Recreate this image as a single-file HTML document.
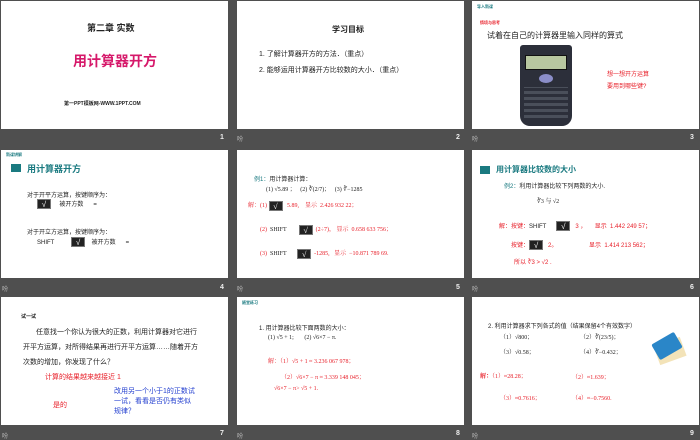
<!DOCTYPE html>
<html><head><meta charset="utf-8"><style>
*{margin:0;padding:0;box-sizing:border-box}
body{width:700px;height:438px;background:#4f4f4f;position:relative;overflow:hidden;font-family:"Liberation Sans","Noto Sans CJK SC",sans-serif;color:#222}
.s{position:absolute;background:#fff;width:227px;height:128px;overflow:hidden}
.t{position:absolute;white-space:nowrap;font-size:7px}
.n{position:absolute;color:#eee;font-size:7px;font-weight:bold}
.d{position:absolute;color:#bbb;font-size:6px}
.r{color:#e8202a}
.k{display:inline-block;width:14px;height:10px;background:#222;border:1px solid #777;color:#fff;font-size:8px;line-height:9px;text-align:center;vertical-align:middle}
.tl{color:#1a7a80;font-weight:bold}
.ic{position:absolute;width:10px;height:8px;background:#1a7a80}
.sr{font-family:"Liberation Serif","Noto Serif CJK SC",serif}
</style></head><body>
<!-- row 1 -->
<div class="s" style="left:1px;top:1px">
<div class="t" style="left:86px;top:20px;font-size:9px;font-weight:bold">第二章 实数</div>
<div class="t" style="left:72px;top:50px;font-size:14px;font-weight:bold;color:#d6186a">用计算器开方</div>
<div class="t" style="left:63px;top:99px;font-size:5px;font-weight:bold">第一PPT模板网-WWW.1PPT.COM</div>
</div>
<div class="s" style="left:237px;top:1px">
<div class="t" style="left:95px;top:23px;font-size:8px;font-weight:bold">学习目标</div>
<div class="t" style="left:22px;top:48px;font-size:7px">1. 了解计算器开方的方法．（重点）</div>
<div class="t" style="left:22px;top:64px;font-size:7px">2. 能够运用计算器开方比较数的大小．（重点）</div>
</div>
<div class="s" style="left:472px;top:1px">
<div class="t tl" style="left:5px;top:3px;font-size:4px">导入新课</div>
<div class="t r" style="left:8px;top:19px;font-size:4px;font-weight:bold">情境与思考</div>
<div class="t" style="left:15px;top:29px;font-size:8px">试着在自己的计算器里输入同样的算式</div>
<div style="position:absolute;left:48px;top:44px;width:52px;height:81px;background:#2c2f3a;border-radius:3px 3px 10px 10px">
<div style="position:absolute;left:5px;top:10px;width:42px;height:15px;background:#b8c7a0;border:1px solid #111"></div>
<div style="position:absolute;left:19px;top:29px;width:14px;height:9px;border-radius:50%;background:#8b8ec8"></div>
<div style="position:absolute;left:4px;top:42px;width:44px;height:34px;background:repeating-linear-gradient(0deg,#2c2f3a 0 3px,#4a4f5a 3px 6px)"></div>
</div>
<div class="t r" style="left:135px;top:68px;font-size:6px">想一想开方运算</div>
<div class="t r" style="left:135px;top:80px;font-size:6px">要用到哪些键?</div>
</div>
<div class="n" style="left:220px;top:134px">1</div><div class="d" style="left:237px;top:134px">吩</div>
<div class="n" style="left:456px;top:134px">2</div><div class="d" style="left:472px;top:134px">吩</div>
<div class="n" style="left:690px;top:134px">3</div>
<!-- row 2 -->
<div class="s" style="left:1px;top:150px">
<div class="t tl" style="left:5px;top:2px;font-size:4px">新课讲解</div>
<div class="ic" style="left:10px;top:14px"></div>
<div class="t tl" style="left:26px;top:12px;font-size:9px">用计算器开方</div>
<div class="t" style="left:26px;top:40px;font-size:6px">对于开平方运算，按键顺序为：</div>
<div class="t" style="left:36px;top:49px;font-size:6px"><span class="k">√</span>&nbsp;&nbsp;&nbsp;&nbsp;&nbsp;被开方数&nbsp;&nbsp;&nbsp;&nbsp;&nbsp;&nbsp;=</div>
<div class="t" style="left:26px;top:77px;font-size:6px">对于开立方运算，按键顺序为：</div>
<div class="t" style="left:36px;top:87px;font-size:6px">SHIFT&nbsp;&nbsp;&nbsp;&nbsp;&nbsp;&nbsp;&nbsp;&nbsp;&nbsp;&nbsp;<span class="k">√</span>&nbsp;&nbsp;&nbsp;&nbsp;被开方数&nbsp;&nbsp;&nbsp;&nbsp;&nbsp;&nbsp;=</div>
</div>
<div class="s" style="left:237px;top:150px">
<div class="t" style="left:17px;top:24px;font-size:6px"><span style="color:#1a7a80">例1：</span>用计算器计算：</div>
<div class="t sr" style="left:29px;top:34px;font-size:6px">(1) √5.89 ；&nbsp;&nbsp;&nbsp;(2) ∛(2/7)；&nbsp;&nbsp;&nbsp;(3) ∛−1285</div>
<div class="t r sr" style="left:11px;top:50px;font-size:6px">解：(1) <span class="k">√</span>&nbsp;&nbsp;&nbsp;5.89,&nbsp;&nbsp;&nbsp;&nbsp;显示&nbsp;&nbsp;2.426 932 22；</div>
<div class="t sr" style="left:23px;top:74px;font-size:6px"><span class="r">(2)</span>&nbsp;&nbsp;SHIFT&nbsp;&nbsp;&nbsp;&nbsp;&nbsp;&nbsp;&nbsp;&nbsp;<span class="k">√</span>&nbsp;&nbsp;<span class="r">(2÷7)，&nbsp;显示&nbsp;&nbsp;0.658 633 756；</span></div>
<div class="t sr" style="left:23px;top:98px;font-size:6px"><span class="r">(3)</span>&nbsp;&nbsp;SHIFT&nbsp;&nbsp;&nbsp;&nbsp;&nbsp;&nbsp;&nbsp;<span class="k">√</span>&nbsp;&nbsp;<span class="r">-1285,&nbsp;&nbsp;&nbsp;显示&nbsp;&nbsp;−10.871 789 69.</span></div>
</div>
<div class="s" style="left:472px;top:150px">
<div class="ic" style="left:8px;top:16px"></div>
<div class="t tl" style="left:24px;top:14px;font-size:8px">用计算器比较数的大小</div>
<div class="t" style="left:32px;top:31px;font-size:6px"><span style="color:#1a7a80">例2：</span>利用计算器比较下列两数的大小.</div>
<div class="t sr" style="left:65px;top:46px;font-size:6px">∛3 与 √2</div>
<div class="t r" style="left:27px;top:71px;font-size:6px">解：按键：<span style="color:#222">SHIFT</span>&nbsp;&nbsp;&nbsp;&nbsp;&nbsp;&nbsp;<span class="k">√</span>&nbsp;&nbsp;&nbsp;3 ，&nbsp;&nbsp;&nbsp;&nbsp;&nbsp;显示&nbsp;&nbsp;1.442 249 57；</div>
<div class="t r" style="left:39px;top:90px;font-size:6px">按键：<span class="k">√</span>&nbsp;&nbsp;&nbsp;2。&nbsp;&nbsp;&nbsp;&nbsp;&nbsp;&nbsp;&nbsp;&nbsp;&nbsp;&nbsp;&nbsp;&nbsp;&nbsp;&nbsp;&nbsp;&nbsp;&nbsp;&nbsp;&nbsp;显示&nbsp;&nbsp;1.414 213 562；</div>
<div class="t r" style="left:42px;top:107px;font-size:6px">所以 ∛3 &gt; √2 .</div>
</div>
<div class="d" style="left:2px;top:284px">吩</div><div class="n" style="left:220px;top:284px">4</div><div class="d" style="left:237px;top:284px">吩</div>
<div class="n" style="left:456px;top:284px">5</div><div class="d" style="left:472px;top:284px">吩</div>
<div class="n" style="left:690px;top:284px">6</div>
<!-- row 3 -->
<div class="s" style="left:1px;top:297px">
<div class="t" style="left:20px;top:16px;font-size:5px;font-weight:bold">试一试</div>
<div class="t" style="left:35px;top:30px;font-size:7px">任意找一个你认为很大的正数，利用计算器对它进行</div>
<div class="t" style="left:22px;top:45px;font-size:7px">开平方运算，对所得结果再进行开平方运算……随着开方</div>
<div class="t" style="left:22px;top:60px;font-size:7px">次数的增加，你发现了什么？</div>
<div class="t r" style="left:44px;top:75px;font-size:7px">计算的结果越来越接近 1</div>
<div class="t r" style="left:52px;top:103px;font-size:7px">是的</div>
<div class="t" style="left:113px;top:90px;font-size:7px;color:#2440d0;line-height:10px">改用另一个小于1的正数试<br>一试，看看是否仍有类似<br>规律？</div>
</div>
<div class="s" style="left:237px;top:297px">
<div class="t tl" style="left:5px;top:3px;font-size:4px">随堂练习</div>
<div class="t" style="left:22px;top:26px;font-size:6px">1. 用计算器比较下面两数的大小：</div>
<div class="t sr" style="left:31px;top:38px;font-size:6px">(1) √5 + 1;&nbsp;&nbsp;&nbsp;&nbsp;&nbsp;&nbsp;&nbsp;(2) √6×7 − π.</div>
<div class="t r sr" style="left:31px;top:59px;font-size:6px">解：（1）√5 + 1 ≈ 3.236 067 978；</div>
<div class="t r sr" style="left:44px;top:75px;font-size:6px">（2）√6×7 − π ≈ 3.339 148 045；</div>
<div class="t r sr" style="left:37px;top:89px;font-size:6px">√6×7 − π&gt; √5 + 1.</div>
</div>
<div class="s" style="left:472px;top:297px">
<div class="t" style="left:16px;top:24px;font-size:6px">2. 利用计算器求下列各式的值（结果保留4个有效数字）</div>
<div class="t sr" style="left:28px;top:35px;font-size:6px">（1）√800；</div>
<div class="t sr" style="left:108px;top:35px;font-size:6px">（2）∛(23/5)；</div>
<div class="t sr" style="left:28px;top:50px;font-size:6px">（3）√0.58；</div>
<div class="t sr" style="left:108px;top:50px;font-size:6px">（4）∛−0.432；</div>
<div style="position:absolute;left:184px;top:44px;width:28px;height:20px;background:#f3e3b8;transform:rotate(-20deg)"></div>
<div style="position:absolute;left:182px;top:40px;width:26px;height:18px;background:#2a86c8;transform:rotate(-30deg);border-radius:2px"></div>
<div class="t r sr" style="left:8px;top:74px;font-size:6px"><b>解：</b>（1）≈28.28；</div>
<div class="t r sr" style="left:100px;top:75px;font-size:6px">（2）≈1.639；</div>
<div class="t r sr" style="left:28px;top:96px;font-size:6px">（3）≈0.7616；</div>
<div class="t r sr" style="left:100px;top:96px;font-size:6px">（4）≈−0.7560.</div>
</div>
<div class="d" style="left:2px;top:431px">吩</div><div class="n" style="left:220px;top:430px">7</div><div class="d" style="left:237px;top:431px">吩</div>
<div class="n" style="left:456px;top:430px">8</div><div class="d" style="left:472px;top:431px">吩</div>
<div class="n" style="left:690px;top:430px">9</div>
</body></html>
